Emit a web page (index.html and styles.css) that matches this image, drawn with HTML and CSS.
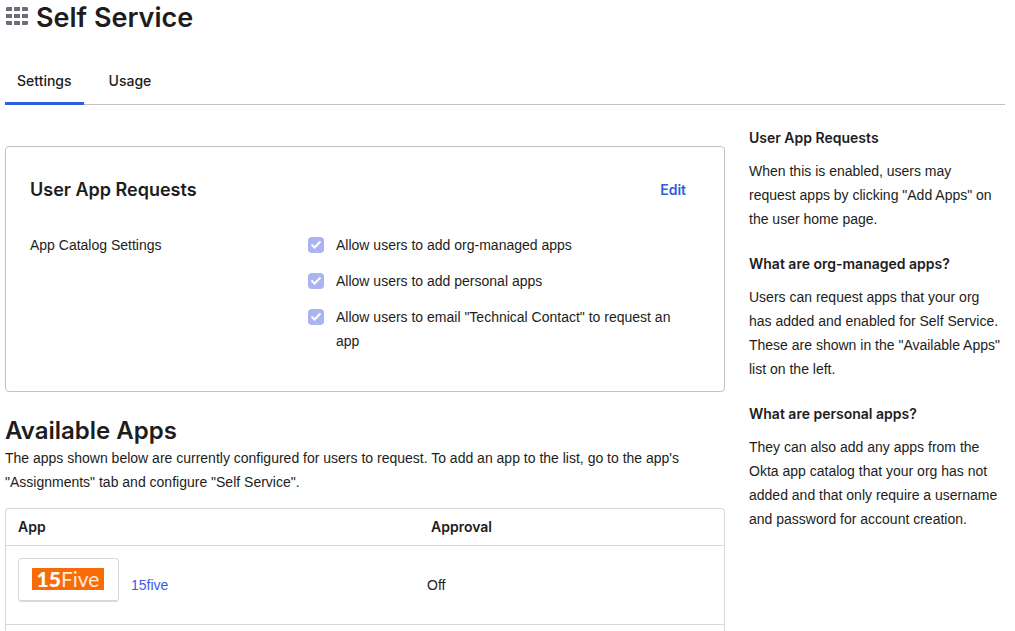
FILE: index.html
```html
<!DOCTYPE html>
<html lang="en">
<head>
<meta charset="utf-8">
<meta name="viewport" content="width=device-width, initial-scale=1">
<title>Self Service</title>
<link rel="stylesheet" href="styles.css">
</head>
<body>
<header class="page-header">
  <svg class="grid-icon" width="22" height="18" viewBox="0 0 22 18" fill="#6e6e78" aria-hidden="true">
    <path d="M1 0h5v4H0V1zM8 0h6v4H8zM16 0h5l1 1v3h-6zM0 7h6v4H0zM8 7h6v4H8zM16 7h6v4h-6zM0 14h6v4H1l-1-1zM8 14h6v4H8zM16 14h6v3l-1 1h-5z"/>
  </svg>
  <h1 class="page-title">Self Service</h1>
</header>
<nav class="tabs">
  <a class="tab tab-active" href="#settings" aria-current="page">Settings</a>
  <a class="tab" href="#usage">Usage</a>
</nav>
<div class="layout">
  <main class="main">
    <section class="card">
      <div class="card-head">
        <h2 class="card-title">User App Requests</h2>
        <a class="edit-link" href="#edit">Edit</a>
      </div>
      <div class="setting" role="group" aria-labelledby="catalog-label">
        <div id="catalog-label">App Catalog Settings</div>
        <div class="options">
          <label class="option"><input class="check" type="checkbox" checked disabled><span>Allow users to add org-managed apps</span></label>
          <label class="option"><input class="check" type="checkbox" checked disabled><span>Allow users to add personal apps</span></label>
          <label class="option"><input class="check" type="checkbox" checked disabled><span>Allow users to email "Technical Contact" to request an app</span></label>
        </div>
      </div>
    </section>
    <section class="available">
      <h2 class="section-title">Available Apps</h2>
      <p class="intro">The apps shown below are currently configured for users to request. To add an app to the list, go to the app's "Assignments" tab and configure "Self Service".</p>
      <div class="table-frame">
        <table class="apps">
          <thead>
            <tr><th class="col-app" scope="col">App</th><th class="col-approval" scope="col">Approval</th></tr>
          </thead>
          <tbody>
            <tr>
              <td>
                <div class="app-cell">
                  <span class="logo-box"><span class="logo"><b class="logo-bold">15</b>Five</span></span>
                  <a class="app-link" href="#15five">15five</a>
                </div>
              </td>
              <td>Off</td>
            </tr>
          </tbody>
        </table>
      </div>
    </section>
  </main>
  <aside class="help">
    <section>
      <h3 class="help-title">User App Requests</h3>
      <p class="help-text">When this is enabled, users may request apps by clicking "Add Apps" on the user home page.</p>
    </section>
    <section>
      <h3 class="help-title">What are org-managed apps?</h3>
      <p class="help-text">Users can request apps that your org has added and enabled for Self Service. These are shown in the "Available Apps" list on the left.</p>
    </section>
    <section>
      <h3 class="help-title">What are personal apps?</h3>
      <p class="help-text">They can also add any apps from the Okta app catalog that your org has not added and that only require a username and password for account creation.</p>
    </section>
  </aside>
</div>
</body>
</html>
```
FILE: styles.css
```css
* { box-sizing: border-box; }
body {
  margin: 0;
  padding: 0 10px 0 5px;
  background: #fff;
  color: #1d1d21;
  font: 400 14px/24px "Liberation Sans", Arial, sans-serif;
}
h1, h2, h3, p { margin: 0; }
h1, h2, h3, th, .tab, .edit-link { font-family: Inter, "Liberation Sans", sans-serif; }
a { color: #3f59e4; text-decoration: none; }

.page-header { display: flex; align-items: center; gap: 8px; height: 34px; padding-left: 1px; }
.grid-icon { flex: none; margin-bottom: 2px; }
.page-title { padding-top: 2px; font-size: 27px; font-weight: 600; line-height: 36px; }

.tabs { display: flex; gap: 13px; margin-top: 24px; border-bottom: 1px solid #c1c1c8; }
.tab { padding: 11px 12px 9px; margin-bottom: -1px; border-bottom: 3px solid transparent; color: #1d1d21; font-size: 14px; font-weight: 500; }
.tab-active { border-color: #2b5fe0; }

.layout { display: grid; grid-template-columns: minmax(0, 1fr) 256px; gap: 24px; }
.main { padding-top: 41px; }
.card { padding: 31px 24px 38px; border: 1px solid #c1c1c8; border-radius: 4px; }
.card-head { display: flex; justify-content: space-between; align-items: center; padding-right: 14px; }
.card-title { font-size: 18px; font-weight: 600; line-height: 24px; }
.edit-link { color: #2b5fe0; font-size: 14px; font-weight: 600; }
.setting { display: grid; grid-template-columns: 278px minmax(0, 1fr); margin-top: 31px; }
.options { display: grid; gap: 12px; padding-right: 12px; }
.option { display: flex; gap: 12px; }
.check {
  appearance: none;
  flex: none;
  width: 16px;
  height: 16px;
  margin: 4px 0;
  border-radius: 4px;
  background: #a9b4f0 url("data:image/svg+xml,%3Csvg xmlns='http://www.w3.org/2000/svg' viewBox='0 0 16 16'%3E%3Cpath d='M3.5 7.5l3 3 6-6' fill='none' stroke='white' stroke-width='2'/%3E%3C/svg%3E") center / 16px;
}

.available { margin-top: 23px; }
.section-title { font-size: 24px; font-weight: 600; line-height: 31px; }
.table-frame { margin-top: 14px; padding-bottom: 6px; border: 1px solid #d7d7dc; border-bottom: 0; border-radius: 4px 4px 0 0; }
.apps { width: 100%; table-layout: fixed; border-collapse: collapse; }
.apps th, .apps td { padding: 12px; border-bottom: 1px solid #d7d7dc; text-align: left; }
.apps th { padding: 6px 12px; font-size: 14px; font-weight: 600; }
.apps td + td { padding-left: 8px; }
.apps .col-app { width: 413px; }
.app-cell { display: flex; align-items: center; gap: 12px; height: 54px; }
.logo-box { align-self: flex-start; padding: 9px 14px 10px 13px; border: 1px solid #d7d7dc; border-bottom-width: 2px; border-radius: 4px; }
.logo { display: block; width: 72px; background: #f96b07; color: #ffe9d8; font: 400 21px/22px Lato, sans-serif; text-align: center; }
.logo-bold { color: #fff; font-weight: 900; }

.help { display: grid; align-content: start; gap: 21px; padding-top: 21px; }
.help-title { font-size: 14px; font-weight: 600; line-height: 24px; }
.help-text { margin-top: 9px; padding-right: 4px; }
```
